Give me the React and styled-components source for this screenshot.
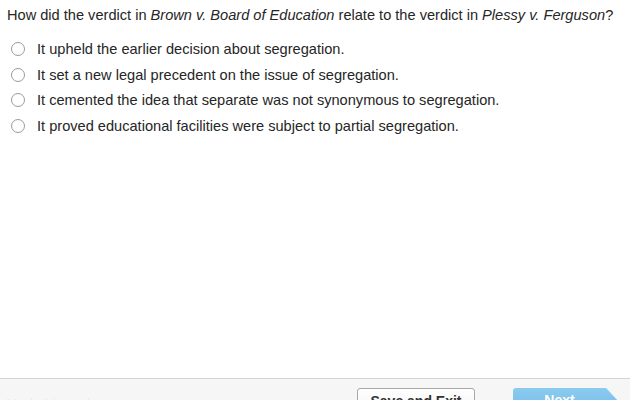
import React from "react";
import styled, { createGlobalStyle } from "styled-components";

const Global = createGlobalStyle`
  html, body {
    margin: 0;
    padding: 0;
    background: #fff;
  }
  body {
    font-family: "Liberation Sans", Arial, sans-serif;
    color: #262626;
  }
`;

const Page = styled.div`
  width: 630px;
  height: 400px;
  display: flex;
  flex-direction: column;
  overflow: hidden;
`;

const Content = styled.div`
  flex: 1;
  padding: 6px 7px 0 7px;
`;

const Question = styled.p`
  margin: 0 0 16px 0;
  font-size: 14.6px;
  line-height: 18px;
`;

const Options = styled.ul`
  list-style: none;
  margin: 0;
  padding: 0 0 0 4px;
  display: flex;
  flex-direction: column;
  gap: 7.6px;
`;

const Option = styled.li`
  display: flex;
  align-items: center;
  gap: 12px;
  font-size: 14.6px;
  line-height: 18px;
`;

const Radio = styled.span`
  width: 12px;
  height: 12px;
  border-radius: 50%;
  border: 1.5px solid #9a9a9a;
  background: #fff;
  flex-shrink: 0;
`;

const Footer = styled.div`
  box-sizing: border-box;
  height: 22px;
  flex-shrink: 0;
  border-top: 1px solid #d4d4d4;
  background: #f6f6f6;
  display: flex;
  align-items: flex-start;
  padding-top: 9px;
`;

const Faint = styled.span`
  margin-left: 6px;
  margin-top: 8px;
  font-size: 14px;
  color: #ebebeb;
  white-space: nowrap;
`;

const Spacer = styled.div`
  flex: 1;
`;

const SaveButton = styled.button`
  flex-shrink: 0;
  width: 118px;
  height: 30px;
  margin-right: 38px;
  border: 1px solid #a8a8a8;
  border-radius: 3px;
  background: linear-gradient(#ffffff, #f1f1f1);
  font-family: "Liberation Sans", Arial, sans-serif;
  font-size: 14px;
  font-weight: bold;
  color: #333;
  padding: 0;
  padding-top: 4px;
  display: flex;
  justify-content: center;
  align-items: flex-start;
`;

const NextButton = styled.button`
  flex-shrink: 0;
  width: 107px;
  height: 30px;
  margin-right: 10px;
  border: none;
  background: linear-gradient(#8ccbf0, #6fb7e6);
  clip-path: polygon(0 0, 87% 0, 100% 50%, 87% 100%, 0 100%);
  border-radius: 3px 0 0 3px;
  font-family: "Liberation Sans", Arial, sans-serif;
  font-size: 14px;
  font-weight: bold;
  color: #fff;
  padding: 0;
  padding-top: 4px;
  padding-right: 14px;
  display: flex;
  justify-content: center;
  align-items: flex-start;
`;

const options = [
  "It upheld the earlier decision about segregation.",
  "It set a new legal precedent on the issue of segregation.",
  "It cemented the idea that separate was not synonymous to segregation.",
  "It proved educational facilities were subject to partial segregation.",
];

export default function App() {
  return (
    <>
      <Global />
      <Page>
        <Content>
          <Question>
            How did the verdict in <em>Brown v. Board of Education</em> relate
            to the verdict in <em>Plessy v. Ferguson</em>?
          </Question>
          <Options>
            {options.map((o) => (
              <Option key={o}>
                <Radio />
                {o}
              </Option>
            ))}
          </Options>
        </Content>
        <Footer>
          <Faint>Mark this and return</Faint>
          <Spacer />
          <SaveButton>Save and Exit</SaveButton>
          <NextButton>Next</NextButton>
        </Footer>
      </Page>
    </>
  );
}
